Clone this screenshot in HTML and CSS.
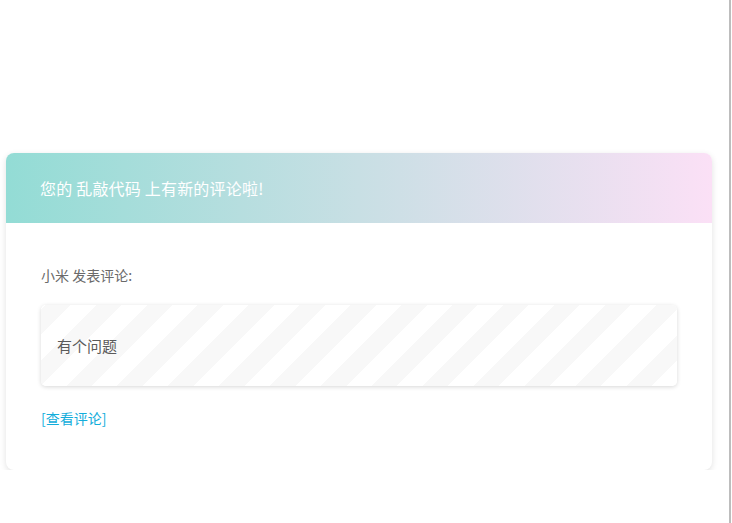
FILE: index.html
```
<!DOCTYPE html>
<html lang="zh-CN">
<head>
<meta charset="utf-8">
<title>评论通知</title>
<link rel="stylesheet" href="styles.css">
</head>
<body>
<div class="page">
  <div class="card">
    <div class="card-head">您的 乱敲代码 上有新的评论啦!</div>
    <div class="card-body">
      <p class="author">小米 发表评论:</p>
      <div class="quote">有个问题</div>
      <a class="link" href="#">[查看评论]</a>
    </div>
  </div>
</div>
<div class="edge"></div>
</body>
</html>
```
FILE: styles.css
```
html, body {
  margin: 0;
  padding: 0;
  background: #fff;
}
body {
  font-family: "Noto Sans CJK SC", "Noto Sans", sans-serif;
}
.page {
  padding: 153px 0 0 6px;
}
.card {
  width: 706px;
  border-radius: 8px;
  background: #fff;
  box-shadow: 0 2px 6px rgba(0, 0, 0, 0.12);
  overflow: hidden;
}
.card-head {
  height: 70px;
  line-height: 70px;
  padding-left: 34px;
  font-size: 16px;
  letter-spacing: 0.2px;
  color: #fff;
  background: linear-gradient(to right, #93dcd5, #c8dfe4 50%, #fbe0f6);
}
.card-body {
  padding: 42px 35px 42px;
}
.author {
  margin: 0;
  font-size: 14px;
  line-height: 20px;
  color: #6a6a6a;
}
.quote {
  margin: 20px 0 22px;
  padding: 30px 16px 30px;
  font-size: 15px;
  line-height: 21px;
  color: #5a5a5a;
  border-radius: 5px;
  box-shadow: 0 1px 4px rgba(0, 0, 0, 0.16);
  background: repeating-linear-gradient(-45deg, #fff, #fff 18px, #f8f8f8 18px, #f8f8f8 36px);
}
.link {
  display: block;
  font-size: 14px;
  line-height: 20px;
  color: #12addb;
  text-decoration: none;
}
.edge {
  position: fixed;
  top: 0;
  bottom: 0;
  left: 729px;
  width: 2px;
  background: #bdbdbd;
}
```
